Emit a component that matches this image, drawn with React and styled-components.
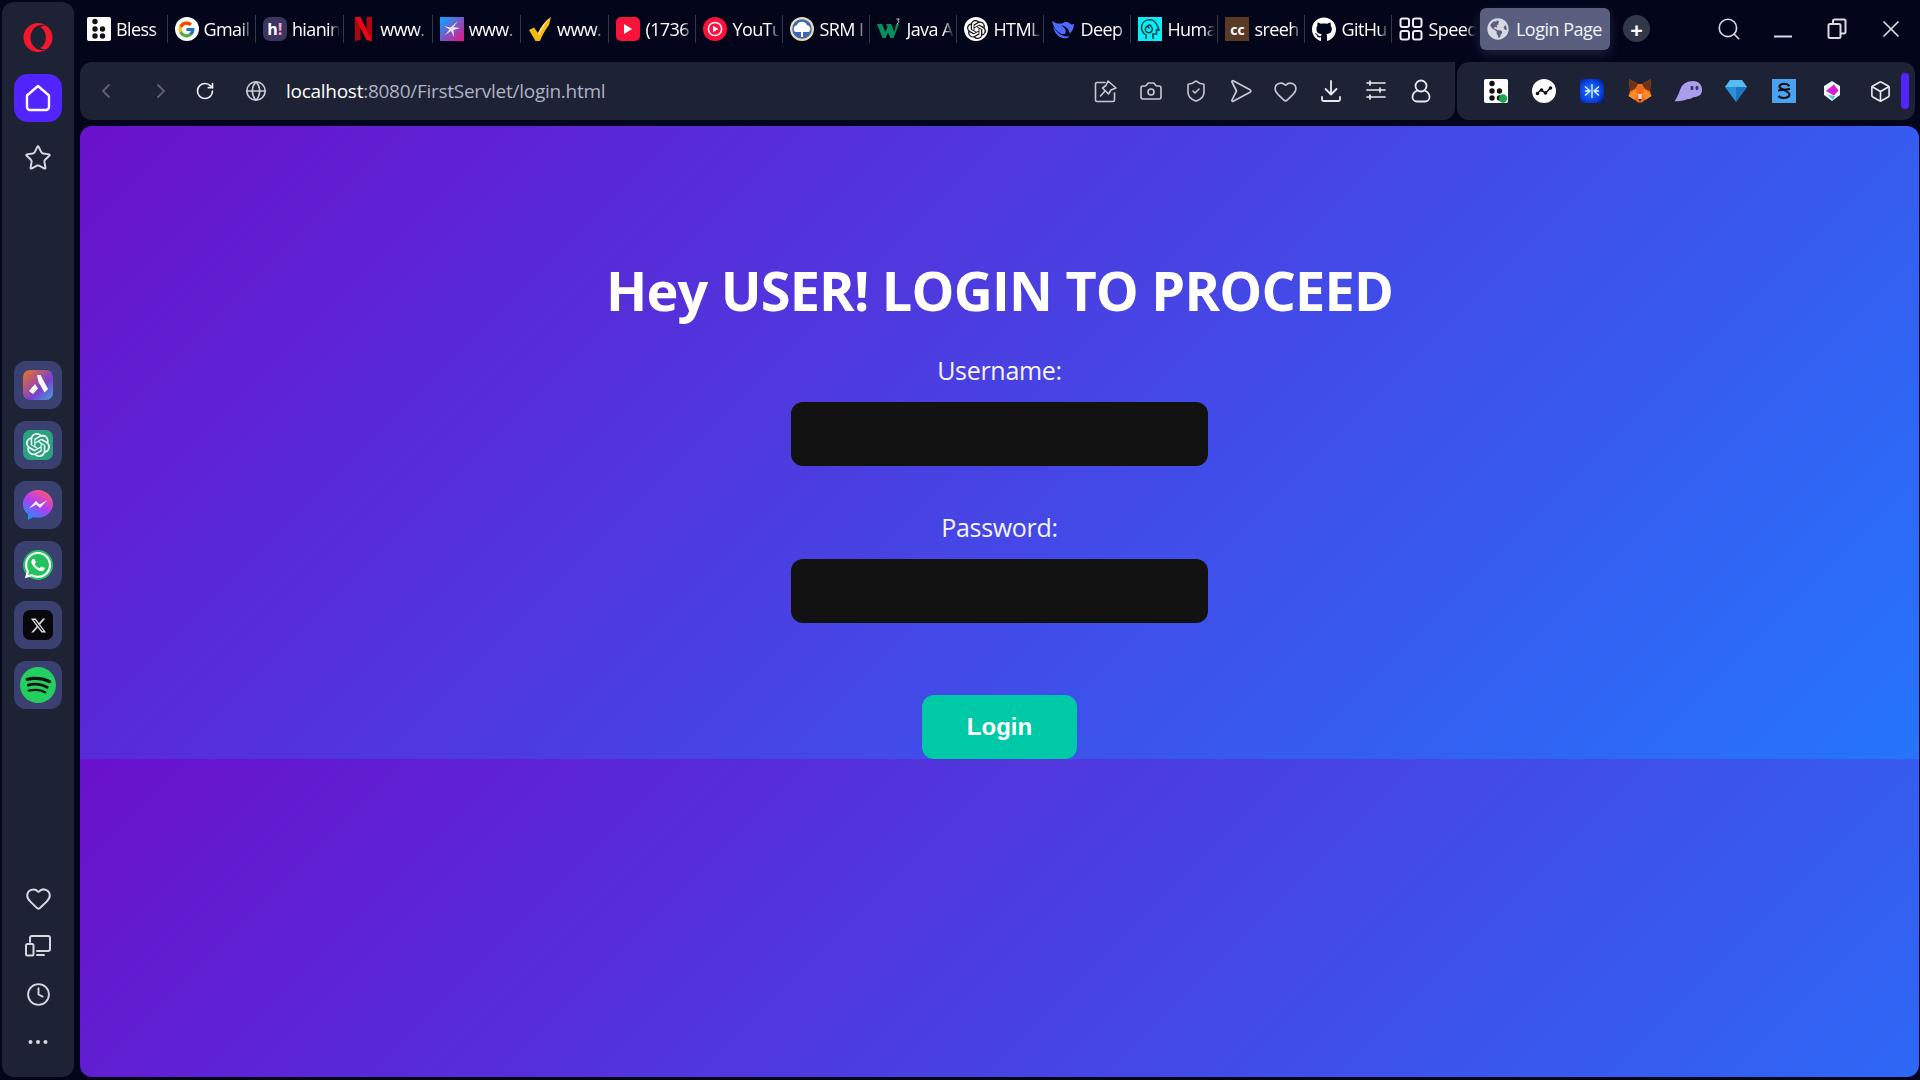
import styled, { createGlobalStyle } from "styled-components";
import {
  Box,
  Camera,
  ChevronLeft,
  ChevronRight,
  Clock,
  Globe,
  Heart,
  RotateCw,
  Search,
  ShieldCheck,
  Star,
  X,
} from "lucide-react";
import { FaGithub, FaGlobeAmericas, FaOpera, FaWhatsapp } from "react-icons/fa";
import { FaXTwitter } from "react-icons/fa6";
import { FcGoogle } from "react-icons/fc";
import { SiOpenai, SiSpotify } from "react-icons/si";

const FONT = `"Open Sans", "Noto Sans", sans-serif`;

const GlobalStyle = createGlobalStyle`
  html, body {
    margin: 0;
    height: 100%;
    background: #03051a;
    overflow: hidden;
  }
  * {
    box-sizing: border-box;
  }
`;

const Shell = styled.div`
  display: grid;
  grid-template-columns: 80px 1fr;
  width: 1920px;
  height: 1080px;
  font-family: ${FONT};
  color: #fff;
`;

const Sidebar = styled.aside`
  margin: 2px 6px 3px 2px;
  padding-top: 20px;
  display: flex;
  flex-direction: column;
  align-items: center;
  background: #1e2235;
  border-radius: 12px;
  color: #d5d8e0;
`;

const OperaMark = styled.div`
  height: 32px;
  margin-bottom: 20px;
  color: #f5172c;
  font-size: 30px;
  display: flex;
  align-items: center;
`;

const HomeButton = styled.div`
  width: 48px;
  height: 48px;
  margin-bottom: 12px;
  display: flex;
  align-items: center;
  justify-content: center;
  background: #5224ff;
  border-radius: 14px;
  color: #fff;
`;

const PlainSideIcon = styled.div`
  width: 48px;
  height: 48px;
  display: flex;
  align-items: center;
  justify-content: center;
`;

const AppStack = styled.div`
  margin-top: 179px;
  display: flex;
  flex-direction: column;
  gap: 12px;
`;

const AppButton = styled.div`
  width: 48px;
  height: 48px;
  display: flex;
  align-items: center;
  justify-content: center;
  background: #3a4170;
  border-radius: 12px;
`;

const AppTile = styled.div`
  width: 30px;
  height: 30px;
  display: flex;
  align-items: center;
  justify-content: center;
  border-radius: ${(p) => p.$radius || "7px"};
  background: ${(p) => p.$bg};
  color: #fff;
`;

const SpotifyDisc = styled.div`
  width: 36px;
  height: 36px;
  display: flex;
  border-radius: 50%;
  color: #22d05f;
  background: radial-gradient(circle, #111 0 58%, transparent 62%);
`;

const SideFooter = styled.div`
  margin-top: auto;
  padding-bottom: 11px;
  display: flex;
  flex-direction: column;
  align-items: center;
`;

const Main = styled.main`
  min-width: 0;
  display: flex;
  flex-direction: column;
`;

const TabStrip = styled.div`
  height: 62px;
  padding-top: 8px;
  display: flex;
  align-items: flex-start;
`;

const Tab = styled.div`
  width: ${(p) => p.$w}px;
  height: 42px;
  padding-left: 7px;
  display: flex;
  align-items: center;
  gap: 5px;
  flex: none;
  position: relative;
  &::after {
    content: "";
    position: absolute;
    right: 0;
    top: 7px;
    width: 1px;
    height: 28px;
    background: ${(p) => (p.$last ? "transparent" : "#33374a")};
  }
`;

const TabLabel = styled.span`
  width: 48px;
  overflow: hidden;
  white-space: nowrap;
  font-size: 18px;
  letter-spacing: -0.6px;
  mask-image: linear-gradient(90deg, #000 78%, transparent 100%);
`;

const Favicon = styled.span`
  width: 24px;
  height: 24px;
  flex: none;
  display: flex;
  align-items: center;
  justify-content: center;
  border-radius: ${(p) => p.$radius || "0"};
  background: ${(p) => p.$bg || "transparent"};
  color: ${(p) => p.$color || "#fff"};
  font-size: ${(p) => p.$size || 16}px;
  font-weight: 700;
`;

const Bang = styled.span`
  color: #f7a8d8;
`;

const ActiveTab = styled.div`
  width: 130px;
  height: 42px;
  padding-left: 7px;
  display: flex;
  align-items: center;
  gap: 7px;
  flex: none;
  background: #5a5f80;
  border-radius: 6px;
  box-shadow: 0 4px 12px rgba(120, 125, 160, 0.25);
  font-size: 18px;
  letter-spacing: -0.5px;
  white-space: nowrap;
  color: #f3f4f8;
`;

const NewTab = styled.div`
  width: 27px;
  height: 27px;
  margin: 7px 0 0 13px;
  display: flex;
  align-items: center;
  justify-content: center;
  background: #33374a;
  border-radius: 50%;
  font-size: 22px;
  font-weight: 700;
  line-height: 1;
`;

const WindowControls = styled.div`
  margin-left: auto;
  padding: 8px 2px 0 0;
  display: flex;
  align-items: center;
  color: #d9dbe3;
`;

const WindowButton = styled.div`
  width: 54px;
  height: 26px;
  display: flex;
  align-items: center;
  justify-content: center;
`;

const ToolRow = styled.div`
  height: 58px;
  padding-right: 5px;
  display: flex;
  gap: 2px;
`;

const AddressBar = styled.div`
  width: 1375px;
  padding: 0 0 0 14px;
  display: flex;
  align-items: center;
  background: #1e2235;
  border-radius: 12px 0 12px 12px;
`;

const NavIcon = styled.div`
  width: ${(p) => p.$w}px;
  display: flex;
  color: ${(p) => p.$color || "#e8e9ef"};
`;

const UrlText = styled.div`
  font-size: 19px;
  letter-spacing: -0.27px;
  color: #aeb2c2;
  & b {
    font-weight: 400;
    color: #fff;
  }
`;

const PageActions = styled.div`
  margin-left: auto;
  padding-right: 12px;
  display: flex;
  color: #c6c9d4;
`;

const ActionSlot = styled.div`
  width: 45px;
  display: flex;
  justify-content: center;
`;

const ExtensionBar = styled.div`
  flex: 1;
  padding-left: 15px;
  display: flex;
  align-items: center;
  position: relative;
  background: #1e2235;
  border-radius: 12px;
`;

const ExtensionSlot = styled.div`
  width: 48px;
  display: flex;
  justify-content: center;
  color: #e8e9ef;
`;

const ScrollPill = styled.div`
  position: absolute;
  right: 6px;
  top: 11px;
  width: 8px;
  height: 36px;
  background: #5224ff;
  border-radius: 4px;
`;

const Page = styled.section`
  flex: 1;
  margin: 6px 1px 3px 0;
  padding-top: 126px;
  display: flex;
  flex-direction: column;
  align-items: center;
  border-radius: 12px;
  background-image: linear-gradient(135deg, #6a11cb, #2575fc);
  background-size: 100% 633px;
  background-repeat: repeat;
`;

const Title = styled.h1`
  margin: 0 0 25px;
  font-size: 54px;
  line-height: 76px;
  font-weight: 700;
  letter-spacing: -0.8px;
`;

const FieldLabel = styled.label`
  margin-bottom: 14px;
  font-size: 25px;
  line-height: 35px;
  letter-spacing: -0.3px;
  color: #f4f4fb;
`;

const FieldInput = styled.input`
  width: 417px;
  height: 64px;
  margin-bottom: 44px;
  border: 0;
  border-radius: 12px;
  background: #121212;
  outline: none;
`;

const LoginButton = styled.button`
  width: 155px;
  height: 64px;
  margin-top: 28px;
  border: 0;
  border-radius: 12px;
  background: #00c9a7;
  color: #fff;
  font-family: "Liberation Sans", Arial, sans-serif;
  font-size: 24px;
  font-weight: 700;
`;

const HomeGlyph = () => (
  <svg width="28" height="30" viewBox="0 0 28 30" fill="none" stroke="#fff" strokeWidth="2.4" strokeLinejoin="round">
    <path d="M3 12.5 14 3l11 9.5V24a3 3 0 0 1-3 3H6a3 3 0 0 1-3-3Z" />
  </svg>
);

const DevicesGlyph = () => (
  <svg width="26" height="22" viewBox="0 0 26 22" fill="none" stroke="currentColor" strokeWidth="2" strokeLinejoin="round" strokeLinecap="round">
    <path d="M5 7V3a2 2 0 0 1 2-2h16a2 2 0 0 1 2 2v11a2 2 0 0 1-2 2H12" />
    <rect x="1" y="9" width="7.5" height="11.5" rx="1.5" />
    <path d="M12 20h7" />
  </svg>
);

const Dots = () => (
  <svg width="20" height="6" viewBox="0 0 20 6" fill="currentColor">
    <circle cx="2.5" cy="3" r="2" />
    <circle cx="10" cy="3" r="2" />
    <circle cx="17.5" cy="3" r="2" />
  </svg>
);

const AriaGlyph = () => (
  <svg width="22" height="22" viewBox="0 0 22 22" fill="#fff">
    <path d="M10 1h3.500L21 15l-3.500 3.500L11.500 8ZM8 10l3 4.500-5 5.500-4-3Z" />
  </svg>
);

const MessengerGlyph = () => (
  <svg width="30" height="30" viewBox="0 0 30 30">
    <defs>
      <linearGradient id="msgr" x1="0.8" y1="0" x2="0.2" y2="1">
        <stop offset="0" stopColor="#ff5a6e" />
        <stop offset="0.5" stopColor="#b03cf5" />
        <stop offset="1" stopColor="#1597ff" />
      </linearGradient>
    </defs>
    <path d="M15 0C6.700 0 0 6.200 0 14c0 4.200 1.900 7.800 5 10.300V30l5.400-3c1.400.4 3 .6 4.600.6 8.300 0 15-6.100 15-13.600S23.300 0 15 0Z" fill="url(#msgr)" />
    <path d="M6 18.500 13 11l3.500 3.500L24 10.500 17 18l-3.500-3.500Z" fill="#fff" />
  </svg>
);

const BlessGlyph = ({ dot }) => (
  <svg width="24" height="24" viewBox="0 0 24 24">
    <rect width="24" height="24" rx="2" fill="#fff" />
    <g fill="#111">
      <circle cx="8" cy="4.500" r="2.700" />
      <circle cx="8" cy="12" r="2.700" />
      <circle cx="15.500" cy="12" r="2.700" />
      <circle cx="8" cy="19" r="2.700" />
      <circle cx="15.500" cy="19" r="2.700" />
    </g>
    {dot && <circle cx="19" cy="19.500" r="4.200" fill="#1aa551" />}
  </svg>
);

const NetflixGlyph = () => (
  <svg width="17" height="24" viewBox="0 0 17 24">
    <path d="M0 0H5.500V23L0 24Z" fill="#b0060f" />
    <path d="M11.500 0H17V24L11.500 23Z" fill="#b0060f" />
    <path d="M0 0H5.500L17 24 11.500 23Z" fill="#e50914" />
  </svg>
);

const ShardGlyph = () => (
  <svg width="18" height="18" viewBox="0 0 18 18" fill="#e6e2ea">
    <path d="M15 1 10.500 7 17 8 10.500 10 11 17 8 11 2 15 6.500 9.500 1 6 7.500 7.500Z" />
  </svg>
);

const CheckGlyph = () => (
  <svg width="24" height="24" viewBox="0 0 24 24">
    <path d="M1 13 6 10.500 10 16C13 10 17 4 23 0L21 8C17 13 14 19 12 24H7.500Z" fill="#f5b914" />
    <path d="M10 16C13 10 17 4 23 0L21 2C17 7 13 13 11 19Z" fill="#ffe27a" />
  </svg>
);

const PlayGlyph = () => (
  <svg width="10" height="12" viewBox="0 0 10 12" fill="#fff">
    <path d="M1 1 9 6 1 11Z" />
  </svg>
);

const MusicGlyph = () => (
  <svg width="24" height="24" viewBox="0 0 24 24">
    <circle cx="12" cy="12" r="12" fill="#ff0f3c" />
    <circle cx="12" cy="12" r="6.600" fill="none" stroke="#fff" strokeWidth="1.500" />
    <path d="M10 8.700 15.500 12 10 15.300Z" fill="#fff" />
  </svg>
);

const SrmGlyph = () => (
  <svg width="24" height="24" viewBox="0 0 24 24">
    <circle cx="12" cy="12" r="12" fill="#e9dcb5" />
    <circle cx="12" cy="12" r="9.800" fill="#3d66b8" />
    <path d="M5 15a4 4 0 0 1 2-7 5.500 5.500 0 0 1 10 0 4 4 0 0 1 2 7Z" fill="#fff" />
    <path d="M11 14h2v6h-2Z" fill="#fff" />
  </svg>
);

const W3Glyph = () => (
  <svg width="24" height="24" viewBox="0 0 24 24">
    <path d="M0 7H5L8.500 15 10.500 10 9 7H14L17.500 15 19 7H22L16.500 21H13.500L11 15.500 8.500 21H5.500Z" fill="#04905f" />
    <path d="M19.500 2h2.800l-1.400 1.700c1.400.3 1.400 2.800-1 2.800" fill="none" stroke="#dfe8e4" strokeWidth=".9" />
  </svg>
);

const WhaleGlyph = () => (
  <svg width="24" height="22" viewBox="0 0 26 22" fill="#4d6bfe">
    <path d="M1 2C3 11 9 17 15 16.500 18 13 14 9 11 7 15 7 20 11 20 16 23 14 25 10 25 5 23.500 6.500 22 6.500 20.500 5 17.500 2.500 14 3 12 5 8 5.500 4 4.500 1 2Z" />
    <path d="M2.500 8C3 15 9 21 15 21 17.500 21 19 20 20 18.500 13 20.500 6.500 15.500 2.500 8Z" />
  </svg>
);

const HeadGlyph = () => (
  <svg width="20" height="22" viewBox="0 0 20 22" fill="none" stroke="#063a44" strokeWidth="1.500">
    <path d="M6 21v-4C3 15 1.500 12.500 1.500 9.500A8 8 0 0 1 17 7l2 5h-2.500v4H13v5" />
    <path d="M9.500 10a1.500 1.500 0 1 1 1.500-1.500 3.500 3.500 0 1 1-3.500-.500" />
  </svg>
);

const SpeedGlyph = () => (
  <svg width="24" height="24" viewBox="0 0 24 24" fill="none" stroke="#eceef4" strokeWidth="2">
    <rect x="1.500" y="1.500" width="8.500" height="8.500" rx="2" />
    <rect x="14" y="1.500" width="8.500" height="8.500" rx="2" />
    <rect x="1.500" y="14" width="8.500" height="8.500" rx="2" />
    <rect x="14" y="14" width="8.500" height="8.500" rx="2" />
  </svg>
);

const MinimizeGlyph = () => (
  <svg width="20" height="26" viewBox="0 0 20 26" stroke="currentColor" strokeWidth="2">
    <path d="M1 20.500H19" />
  </svg>
);

const RestoreGlyph = () => (
  <svg width="20" height="22" viewBox="0 0 20 22" fill="none" stroke="currentColor" strokeWidth="2" strokeLinejoin="round">
    <rect x="1.500" y="6" width="12" height="14" rx="1.500" />
    <path d="M6 6V3a1.500 1.500 0 0 1 1.500-1.500H17A1.500 1.500 0 0 1 18.500 3v11a1.500 1.500 0 0 1-1.500 1.500h-3.500" />
  </svg>
);

const PinGlyph = () => (
  <svg width="24" height="24" viewBox="0 0 24 24" fill="none" stroke="currentColor" strokeWidth="1.600" strokeLinejoin="round" strokeLinecap="round">
    <path d="M11 3.500H3a1.500 1.500 0 0 0-1.500 1.500v16A1.500 1.500 0 0 0 3 22.500h16a1.500 1.500 0 0 0 1.500-1.500v-7" />
    <path d="m14 2 8 7-5 2-2.500 4-6-6 3.500-2.500ZM11 12l-4.500 5" />
  </svg>
);

const SendGlyph = () => (
  <svg width="22" height="24" viewBox="0 0 22 24" fill="none" stroke="currentColor" strokeWidth="1.700" strokeLinejoin="round">
    <path d="M3.200 1.800 20 10.800a1.300 1.300 0 0 1 0 2.400L3.200 22.200a.9.900 0 0 1-1.200-1.200L6.500 12 2 3a.9.900 0 0 1 1.200-1.200Z" />
  </svg>
);

const TrayDownloadGlyph = () => (
  <svg width="22" height="24" viewBox="0 0 22 24" fill="none" stroke="#e8e9ef" strokeWidth="1.800" strokeLinecap="round" strokeLinejoin="round">
    <path d="M11 2v13M5.500 10l5.500 5.500 5.500-5.500M2 18v2.500A1.500 1.500 0 0 0 3.500 22h15a1.500 1.500 0 0 0 1.500-1.500V18" />
  </svg>
);

const TunesGlyph = () => (
  <svg width="22" height="22" viewBox="0 0 22 22" fill="none" stroke="#e8e9ef" strokeWidth="1.700" strokeLinecap="round">
    <path d="M2 4h18M2 11h18M2 18h18M5 2v4M15 9v4M5 16v4" />
  </svg>
);

const UserGlyph = () => (
  <svg width="20" height="24" viewBox="0 0 20 24" fill="none" stroke="#e8e9ef" strokeWidth="1.800">
    <circle cx="10" cy="7" r="5.500" />
    <path d="M6.500 11.500C3 13 1.500 15.500 1.500 18c0 2.500 2 4.500 4.500 4.500h8c2.500 0 4.500-2 4.500-4.500 0-2.500-1.500-5-5-6.500" />
  </svg>
);

const WaveGlyph = () => (
  <svg width="24" height="24" viewBox="0 0 24 24">
    <circle cx="12" cy="12" r="12" fill="#fff" />
    <path d="M5 14.500 9 11 13.500 14 19 8.500" fill="none" stroke="#111" strokeWidth="1.600" />
    <circle cx="5.500" cy="14.500" r="1.800" fill="#111" />
    <circle cx="9.500" cy="11" r="1.800" fill="#111" />
    <circle cx="13.500" cy="14" r="1.800" fill="#111" />
    <circle cx="18.500" cy="9" r="1.800" fill="#111" />
  </svg>
);

const SnowGlyph = () => (
  <svg width="24" height="24" viewBox="0 0 24 24">
    <defs>
      <radialGradient id="snow" cx="0.45" cy="0.5" r="0.7">
        <stop offset="0" stopColor="#1d7bff" />
        <stop offset="0.65" stopColor="#0a3fe0" />
        <stop offset="1" stopColor="#041556" />
      </radialGradient>
    </defs>
    <rect width="24" height="24" rx="3" fill="url(#snow)" />
    <path d="M5 12h4M5 7.500 10 12 5 16.500M19 12h-4M19 7.500 14 12l5 4.500M12 5V19" fill="none" stroke="#e8f6ff" strokeWidth="1.300" />
  </svg>
);

const FoxGlyph = () => (
  <svg width="24" height="24" viewBox="0 0 24 24">
    <path d="M1 0 10 5H14L23 0 22 12 23.500 17 17 21 14 23.500H10L7 21 .5 17 2 12Z" fill="#f06a1c" />
    <path d="M1 0 10 5 7 10 2 12ZM23 0 14 5 17 10 22 12Z" fill="#6c3414" />
    <path d="M7 10 10 15 7 21 .5 17ZM17 10 14 15 17 21 23.500 17Z" fill="#ff8a2a" />
    <path d="M10 15H14L13.500 20H10.500Z" fill="#e8d5c8" />
    <path d="M10.500 20H13.500L12 22.500Z" fill="#231f20" />
  </svg>
);

const GhostGlyph = () => (
  <svg width="28" height="21" viewBox="0 0 28 21">
    <path d="M.5 20C3 17 4 14 6 9 8 3 13 0 19 0 25 0 28 4 28 9 28 14 24 16 20 16 19 16 18 18 14 18 11 19 5 21 .5 20Z" fill="#a99df0" />
    <ellipse cx="18" cy="7" rx="1.500" ry="2.200" fill="#3b3660" />
    <ellipse cx="23" cy="7" rx="1.500" ry="2.200" fill="#3b3660" />
  </svg>
);

const DiamondGlyph = () => (
  <svg width="22" height="22" viewBox="0 0 22 22">
    <path d="M5 0H17L22 7H0Z" fill="#55bdf2" />
    <path d="M0 7H22L11 22Z" fill="#2f8fd6" />
    <path d="M11 7 22 7 11 22Z" fill="#1f78bd" />
  </svg>
);

const SwirlGlyph = () => (
  <svg width="24" height="24" viewBox="0 0 24 24">
    <rect width="24" height="24" fill="#4aa3f0" />
    <path d="M17.500 7C15 4 9 4 7.500 7 6 10 18 12 17.500 15.500 17 19.500 9 20 6.500 17M6 11.500 18 10" fill="none" stroke="#0c0c10" strokeWidth="2" />
  </svg>
);

const GemGlyph = () => (
  <svg width="18" height="20" viewBox="0 0 18 20">
    <path d="M9 0 17 5 17 14 9 20 1 14 1 5Z" fill="#eef5f7" />
    <path d="M11 3.500 15.500 9.500 11 14.500 3 10Z" fill="#d61fd0" />
    <path d="M5 14 12 15 10 19Z" fill="#3ec8d8" />
  </svg>
);

const tabs = [
  { w: 87.5, label: "Bless", icon: <BlessGlyph /> },
  { w: 88.4, label: "Gmail", icon: <Favicon $bg="#fff" $radius="50%"><FcGoogle size={19} /></Favicon> },
  { w: 88.4, label: "hianin", icon: <Favicon $bg="#3b3560" $radius="7px">h<Bang>!</Bang></Favicon> },
  { w: 88.4, label: "www.", icon: <Favicon><NetflixGlyph /></Favicon> },
  { w: 88.4, label: "www.", icon: <Favicon $bg="linear-gradient(135deg,#0aa4ff 5%,#e5128a 95%)"><ShardGlyph /></Favicon> },
  { w: 88.4, label: "www.", icon: <CheckGlyph /> },
  { w: 87, label: "(1736", icon: <Favicon $bg="#fa1239" $radius="5px"><PlayGlyph /></Favicon> },
  { w: 87, label: "YouTu", icon: <MusicGlyph /> },
  { w: 87, label: "SRM I", icon: <SrmGlyph /> },
  { w: 87, label: "Java A", icon: <W3Glyph /> },
  { w: 87, label: "HTML", icon: <Favicon $bg="#fff" $radius="50%" $color="#111"><SiOpenai size={19} /></Favicon> },
  { w: 87, label: "Deep", icon: <WhaleGlyph /> },
  { w: 87, label: "Huma", icon: <Favicon $bg="#07eef8"><HeadGlyph /></Favicon> },
  { w: 87, label: "sreeh", icon: <Favicon $bg="#5a3a24" $size={14}>cc</Favicon> },
  { w: 87, label: "GitHu", icon: <Favicon><FaGithub size={25} /></Favicon> },
  { w: 87.5, label: "Speed", icon: <SpeedGlyph />, last: true },
];

const apps = [
  { bg: "linear-gradient(135deg,#e8702a 5%,#7a3fd0 60%,#3fa6d8)", glyph: <AriaGlyph /> },
  { bg: "#2ba27f", glyph: <SiOpenai size={24} /> },
  { bg: "transparent", glyph: <MessengerGlyph /> },
  { bg: "#22c35e", radius: "50%", glyph: <FaWhatsapp size={30} /> },
  { bg: "#08080c", glyph: <FaXTwitter size={17} color="#d8d8dc" /> },
];

const pageActions = [
  <PinGlyph key="pin" />,
  <Camera key="camera" size={24} strokeWidth={1.6} />,
  <ShieldCheck key="shield" size={24} strokeWidth={1.6} />,
  <SendGlyph key="send" />,
  <Heart key="heart" size={25} strokeWidth={1.6} />,
  <TrayDownloadGlyph key="download" />,
  <TunesGlyph key="tunes" />,
  <UserGlyph key="user" />,
];

function App() {
  return (
    <>
      <GlobalStyle />
      <Shell>
        <Sidebar>
          <OperaMark><FaOpera /></OperaMark>
          <HomeButton><HomeGlyph /></HomeButton>
          <PlainSideIcon><Star size={28} strokeWidth={1.7} /></PlainSideIcon>
          <AppStack>
            {apps.map((app, i) => (
              <AppButton key={i}>
                <AppTile $bg={app.bg} $radius={app.radius}>{app.glyph}</AppTile>
              </AppButton>
            ))}
            <AppButton>
              <SpotifyDisc><SiSpotify size={36} /></SpotifyDisc>
            </AppButton>
          </AppStack>
          <SideFooter>
            <PlainSideIcon><Heart size={27} strokeWidth={1.8} /></PlainSideIcon>
            <PlainSideIcon><DevicesGlyph /></PlainSideIcon>
            <PlainSideIcon><Clock size={25} strokeWidth={1.8} /></PlainSideIcon>
            <PlainSideIcon><Dots /></PlainSideIcon>
          </SideFooter>
        </Sidebar>
        <Main>
          <TabStrip>
            {tabs.map((tab, i) => (
              <Tab key={i} $w={tab.w} $last={tab.last}>
                {tab.icon}
                <TabLabel>{tab.label}</TabLabel>
              </Tab>
            ))}
            <ActiveTab>
              <FaGlobeAmericas size={22} color="#d5d7e2" />
              Login Page
            </ActiveTab>
            <NewTab>+</NewTab>
            <WindowControls>
              <WindowButton><Search size={26} strokeWidth={1.5} /></WindowButton>
              <WindowButton><MinimizeGlyph /></WindowButton>
              <WindowButton><RestoreGlyph /></WindowButton>
              <WindowButton><X size={28} strokeWidth={1.5} /></WindowButton>
            </WindowControls>
          </TabStrip>
          <ToolRow>
            <AddressBar>
              <NavIcon $w={55} $color="#5b5f70"><ChevronLeft size={24} /></NavIcon>
              <NavIcon $w={46} $color="#5b5f70"><ChevronRight size={24} /></NavIcon>
              <NavIcon $w={50}><RotateCw size={20} strokeWidth={2} /></NavIcon>
              <NavIcon $w={41} $color="#c9cbd3"><Globe size={22} strokeWidth={1.8} /></NavIcon>
              <UrlText><b>localhost</b>:8080/FirstServlet/login.html</UrlText>
              <PageActions>
                {pageActions.map((icon) => (
                  <ActionSlot key={icon.key}>{icon}</ActionSlot>
                ))}
              </PageActions>
            </AddressBar>
            <ExtensionBar>
              <ExtensionSlot><BlessGlyph dot /></ExtensionSlot>
              <ExtensionSlot><WaveGlyph /></ExtensionSlot>
              <ExtensionSlot><SnowGlyph /></ExtensionSlot>
              <ExtensionSlot><FoxGlyph /></ExtensionSlot>
              <ExtensionSlot><GhostGlyph /></ExtensionSlot>
              <ExtensionSlot><DiamondGlyph /></ExtensionSlot>
              <ExtensionSlot><SwirlGlyph /></ExtensionSlot>
              <ExtensionSlot><GemGlyph /></ExtensionSlot>
              <ExtensionSlot><Box size={23} strokeWidth={1.7} /></ExtensionSlot>
              <ScrollPill />
            </ExtensionBar>
          </ToolRow>
          <Page>
            <Title>Hey USER! LOGIN TO PROCEED</Title>
            <FieldLabel>Username:</FieldLabel>
            <FieldInput type="text" />
            <FieldLabel>Password:</FieldLabel>
            <FieldInput type="password" />
            <LoginButton>Login</LoginButton>
          </Page>
        </Main>
      </Shell>
    </>
  );
}

export default App;
